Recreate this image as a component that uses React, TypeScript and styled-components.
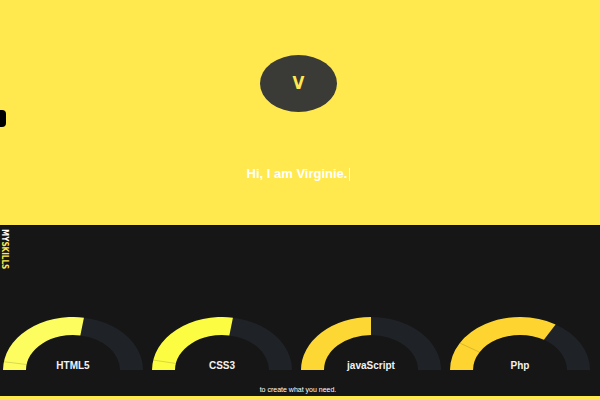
import React from "react";
import styled, { createGlobalStyle } from "styled-components";

const Global = createGlobalStyle`
  html, body { margin: 0; padding: 0; background: #161616; }
  body { font-family: "Liberation Sans", Arial, sans-serif; }
  * { box-sizing: border-box; }
`;

const Page = styled.div`
  width: 600px;
  height: 400px;
  overflow: hidden;
  position: relative;
  display: flex;
  flex-direction: column;
`;

const Hero = styled.section`
  height: 225px;
  flex-shrink: 0;
  background: #ffe94e;
  display: flex;
  flex-direction: column;
  align-items: center;
  padding-top: 55px;
  padding-right: 3px;
`;

const Avatar = styled.div`
  width: 77px;
  height: 57px;
  border-radius: 50%;
  background: #3a3a36;
  display: flex;
  align-items: center;
  justify-content: center;
  color: #ffe94e;
  font-family: "Liberation Sans Narrow", "DejaVu Sans Condensed", sans-serif;
  font-weight: 700;
  font-size: 17px;
  line-height: 1;
`;

const Greeting = styled.h1`
  margin: 54px 0 0;
  font-size: 13px;
  line-height: 16px;
  font-weight: 700;
  color: #ffffff;
  display: flex;
  align-items: center;
`;

const Caret = styled.span`
  display: inline-block;
  width: 1px;
  height: 13px;
  margin-left: 2px;
  background: #ffffff;
`;

const SideTab = styled.div`
  position: absolute;
  left: 0;
  top: 110px;
  width: 6px;
  height: 17px;
  background: #000;
  border-radius: 0 4px 4px 0;
`;

const Skills = styled.section`
  flex: 1;
  min-height: 0;
  background: #161616;
  border-top: 1px solid #0e0e0e;
  border-bottom: 4px solid #ffe94e;
  display: flex;
  flex-direction: column;
  align-items: flex-start;
`;

const SkillsTitle = styled.h2`
  margin: 3px 0 0;
  height: 40px;
  white-space: nowrap;
  writing-mode: vertical-rl;
  font-family: "Liberation Sans Narrow", "DejaVu Sans Condensed", sans-serif;
  font-size: 8px;
  line-height: 8px;
  font-weight: 700;
  color: #ffffff;
`;

const Accent = styled.span`
  color: #ffe94e;
`;

const GaugeRow = styled.div`
  margin-top: 48px;
  padding-left: 3px;
  display: grid;
  grid-template-columns: repeat(4, 140px);
  column-gap: 9px;
`;

const GaugeBox = styled.div`
  position: relative;
  width: 140px;
  height: 53px;
`;

const GaugeLabel = styled.span`
  position: absolute;
  left: 0;
  right: 0;
  bottom: -2px;
  text-align: center;
  font-size: 10px;
  line-height: 12px;
  font-weight: 700;
  color: #f2f2f2;
`;

const Footer = styled.p`
  align-self: stretch;
  margin: 15px 0 0;
  padding-right: 4px;
  text-align: center;
  font-size: 7px;
  line-height: 9px;
  color: #ffffff;
`;

const CX = 70;
const CY = 53;
const RX = 70;
const RY = 53;
const IRX = 47;
const IRY = 35;

const coords = (rx: number, ry: number, deg: number) => {
  const r = (deg * Math.PI) / 180;
  return [CX + rx * Math.cos(r), CY - ry * Math.sin(r)];
};

const pt = (rx: number, ry: number, deg: number) => {
  const [x, y] = coords(rx, ry, deg);
  return `${x.toFixed(2)} ${y.toFixed(2)}`;
};

const sector = (from: number, to: number) =>
  `M ${pt(RX, RY, from)} A ${RX} ${RY} 0 0 1 ${pt(RX, RY, to)} L ${pt(IRX, IRY, to)} A ${IRX} ${IRY} 0 0 0 ${pt(IRX, IRY, from)} Z`;

type Skill = { name: string; value: number; split: number | null; color: string };

const skills: Skill[] = [
  { name: "HTML5", value: 0.55, split: 0.05, color: "#fdfd60" },
  { name: "CSS3", value: 0.55, split: 0.06, color: "#fcfc42" },
  { name: "javaScript", value: 0.5, split: null, color: "#fdd835" },
  { name: "Php", value: 0.67, split: 0.17, color: "#fed530" },
];

const Gauge: React.FC<{ skill: Skill }> = ({ skill }) => {
  const end = 180 - skill.value * 180;
  const split = skill.split !== null ? 180 - skill.split * 180 : null;
  const o = split !== null ? coords(RX, RY, split) : null;
  const i = split !== null ? coords(IRX, IRY, split) : null;
  return (
    <GaugeBox>
      <svg width="140" height="53" viewBox="0 0 140 53">
        <path d={sector(end, 0)} fill="#1f2327" />
        <path d={sector(180, end)} fill={skill.color} />
        {o && i && (
          <line x1={o[0]} y1={o[1]} x2={i[0]} y2={i[1]} stroke="rgba(0,0,0,0.18)" strokeWidth="0.8" />
        )}
      </svg>
      <GaugeLabel>{skill.name}</GaugeLabel>
    </GaugeBox>
  );
};

export default function App() {
  return (
    <>
      <Global />
      <Page>
        <Hero>
          <Avatar>V</Avatar>
          <Greeting>
            Hi, I am Virginie.
            <Caret />
          </Greeting>
        </Hero>
        <SideTab />
        <Skills>
          <SkillsTitle>
            MY<Accent>SKILLS</Accent>
          </SkillsTitle>
          <GaugeRow>
            {skills.map((s) => (
              <Gauge key={s.name} skill={s} />
            ))}
          </GaugeRow>
          <Footer>to create what you need.</Footer>
        </Skills>
      </Page>
    </>
  );
}
